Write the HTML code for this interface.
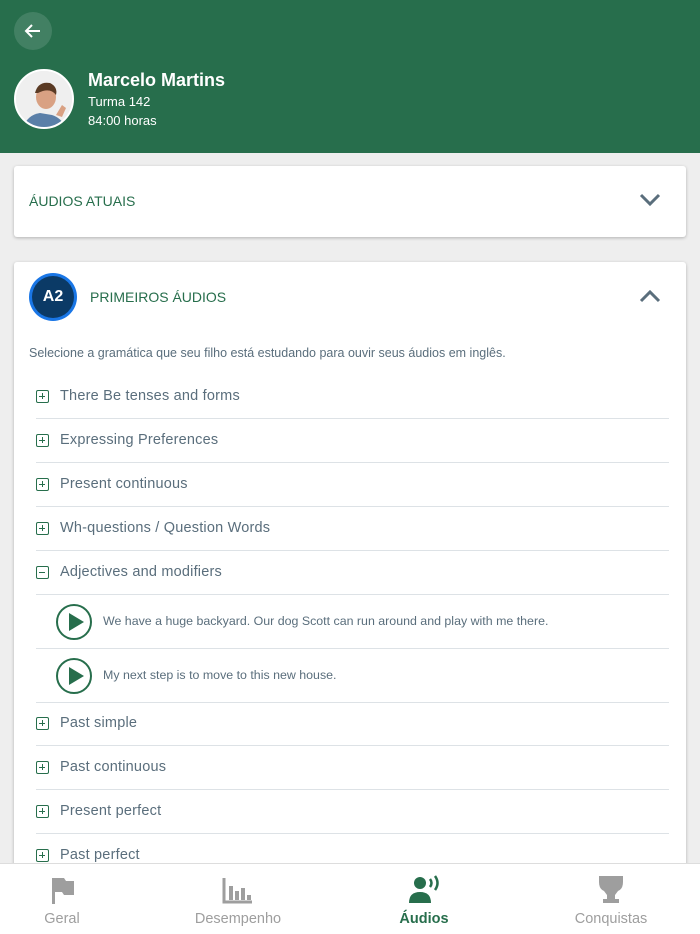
<!DOCTYPE html><html><head><meta charset="utf-8"><style>
*{margin:0;padding:0;box-sizing:border-box}
html,body{width:700px;height:934px;overflow:hidden}
body{background:#eeeeee;font-family:"Liberation Sans",sans-serif;position:relative}
.hdr{position:absolute;left:0;top:0;width:700px;height:153px;background:#276e4c}
.back{position:absolute;left:14px;top:12px;width:38px;height:38px;border-radius:50%;background:rgba(255,255,255,.13)}
.av{position:absolute;left:14px;top:69px;width:60px;height:60px;border-radius:50%;background:#eee;border:2px solid #fff;overflow:hidden}
.card{position:absolute;left:14px;width:672px;background:#fff;border-radius:3px;box-shadow:0 1px 3px rgba(0,0,0,.25)}
.t{position:absolute;color:#5a6e7c;font-size:14px}
.row{position:absolute;left:36px;width:633px;height:44px;border-bottom:1px solid #dde2e6}
.row .ic{position:absolute;left:0;top:15px;width:13px;height:13px;border:1.5px solid #276e4c;border-radius:2px}
.row .ic:before{content:"";position:absolute;left:2px;top:4.5px;width:6px;height:1.5px;background:#276e4c}
.row .ic.p:after{content:"";position:absolute;left:4.5px;top:2px;width:1.5px;height:6px;background:#276e4c}
.row span{position:absolute;left:24px;top:13px;font-size:14.5px;color:#5a6e7c;letter-spacing:.2px}
.arow{position:absolute;left:36px;width:633px;height:54px;border-bottom:1px solid #dde2e6}
.play{position:absolute;left:20px;top:9px;width:36px;height:36px;border:2.5px solid #276e4c;border-radius:50%}
.play:after{content:"";position:absolute;left:11px;top:7px;border-left:15px solid #276e4c;border-top:9px solid transparent;border-bottom:9px solid transparent}
.arow span{position:absolute;left:67px;top:19px;font-size:12.4px;color:#5a6e7c}
.nav{position:absolute;left:0;top:863px;width:700px;height:71px;background:#fff;border-top:1px solid #ddd}
.nav div{position:absolute;top:47px;font-size:14.5px;color:#9e9e9e;text-align:center;width:140px}
</style></head><body>
<div class="hdr">
<div class="back"><svg width="38" height="38"><path d="M26 19H12M18 13l-6 6 6 6" stroke="#fff" stroke-width="2" fill="none"/></svg></div>
<div class="av"><svg width="60" height="60"><rect width="60" height="60" fill="#efefef"/><path d="M6 60 Q10 44 24 42 L36 44 Q48 48 50 60Z" fill="#5a7fa8"/><ellipse cx="30" cy="26" rx="10" ry="12" fill="#d9a183"/><path d="M19 22 Q22 10 34 12 Q42 16 40 24 Q34 16 22 22Z" fill="#5a3a24"/><path d="M40 44l6-10 4 3-4 9z" fill="#d9a183"/></svg></div>
<div style="position:absolute;left:88px;top:70px;color:#fff;font-size:18px;font-weight:bold">Marcelo Martins</div>
<div style="position:absolute;left:88px;top:94px;color:#fff;font-size:13px">Turma 142</div>
<div style="position:absolute;left:88px;top:113px;color:#fff;font-size:13px">84:00 horas</div>
</div>
<div class="card" style="top:166px;height:71px">
<div style="position:absolute;left:15px;top:27px;font-size:14px;color:#276e4c">ÁUDIOS ATUAIS</div>
<svg style="position:absolute;left:624px;top:26px" width="24" height="16"><path d="M3 3l9 9 9-9" stroke="#5a6e7c" stroke-width="3" fill="none"/></svg>
</div>
<div class="card" style="top:262px;height:620px">
<div style="position:absolute;left:15px;top:11px;width:48px;height:48px;border-radius:50%;background:#1976e6;padding:3px"><div style="width:42px;height:42px;border-radius:50%;background:#0b3a66;color:#fff;font-weight:bold;font-size:16px;text-align:center;line-height:42px">A2</div></div>
<div style="position:absolute;left:76px;top:27px;font-size:14px;color:#276e4c">PRIMEIROS ÁUDIOS</div>
<svg style="position:absolute;left:624px;top:26px" width="24" height="16"><path d="M3 13l9-9 9 9" stroke="#5a6e7c" stroke-width="3" fill="none"/></svg>
<div class="t" style="left:15px;top:84px;font-size:12.5px">Selecione a gramática que seu filho está estudando para ouvir seus áudios em inglês.</div>
</div>
<div class="row" style="top:375px"><i class="ic p"></i><span>There Be tenses and forms</span></div>
<div class="row" style="top:419px"><i class="ic p"></i><span>Expressing Preferences</span></div>
<div class="row" style="top:463px"><i class="ic p"></i><span>Present continuous</span></div>
<div class="row" style="top:507px"><i class="ic p"></i><span>Wh-questions / Question Words</span></div>
<div class="row" style="top:551px"><i class="ic"></i><span>Adjectives and modifiers</span></div>
<div class="arow" style="top:595px"><i class="play"></i><span>We have a huge backyard. Our dog Scott can run around and play with me there.</span></div>
<div class="arow" style="top:649px"><i class="play"></i><span>My next step is to move to this new house.</span></div>
<div class="row" style="top:702px"><i class="ic p"></i><span>Past simple</span></div>
<div class="row" style="top:746px"><i class="ic p"></i><span>Past continuous</span></div>
<div class="row" style="top:790px"><i class="ic p"></i><span>Present perfect</span></div>
<div class="row" style="top:834px"><i class="ic p"></i><span>Past perfect</span></div>
<div class="nav">
<svg style="position:absolute;left:50px;top:12px" width="26" height="28"><path d="M2 2h12l2 3h8v14h-10l-2-3H5v12H2z" fill="#9e9e9e"/></svg>
<svg style="position:absolute;left:222px;top:12px" width="32" height="28"><path d="M2 2v24h28" stroke="#9e9e9e" stroke-width="3" fill="none"/><rect x="7" y="10" width="4" height="14" fill="#9e9e9e"/><rect x="13" y="15" width="4" height="9" fill="#9e9e9e"/><rect x="19" y="12" width="4" height="12" fill="#9e9e9e"/><rect x="25" y="19" width="4" height="5" fill="#9e9e9e"/></svg>
<svg style="position:absolute;left:408px;top:10px" width="34" height="30"><circle cx="12" cy="9" r="6" fill="#276e4c"/><path d="M1 29q0-11 11-11t11 11z" fill="#276e4c"/><path d="M22 5q3 4 0 8M27 2q5 7 0 14" stroke="#276e4c" stroke-width="2.5" fill="none"/></svg>
<svg style="position:absolute;left:596px;top:10px" width="30" height="32"><path d="M3 2h24v6q0 7-5 9l-3 4v4h4v4H7v-4h4v-4l-3-4q-5-2-5-9z" fill="#9e9e9e"/></svg>
<div style="left:-8px">Geral</div>
<div style="left:168px">Desempenho</div>
<div style="left:354px;color:#276e4c;font-weight:bold">Áudios</div>
<div style="left:541px">Conquistas</div>
</div>
</body></html>
